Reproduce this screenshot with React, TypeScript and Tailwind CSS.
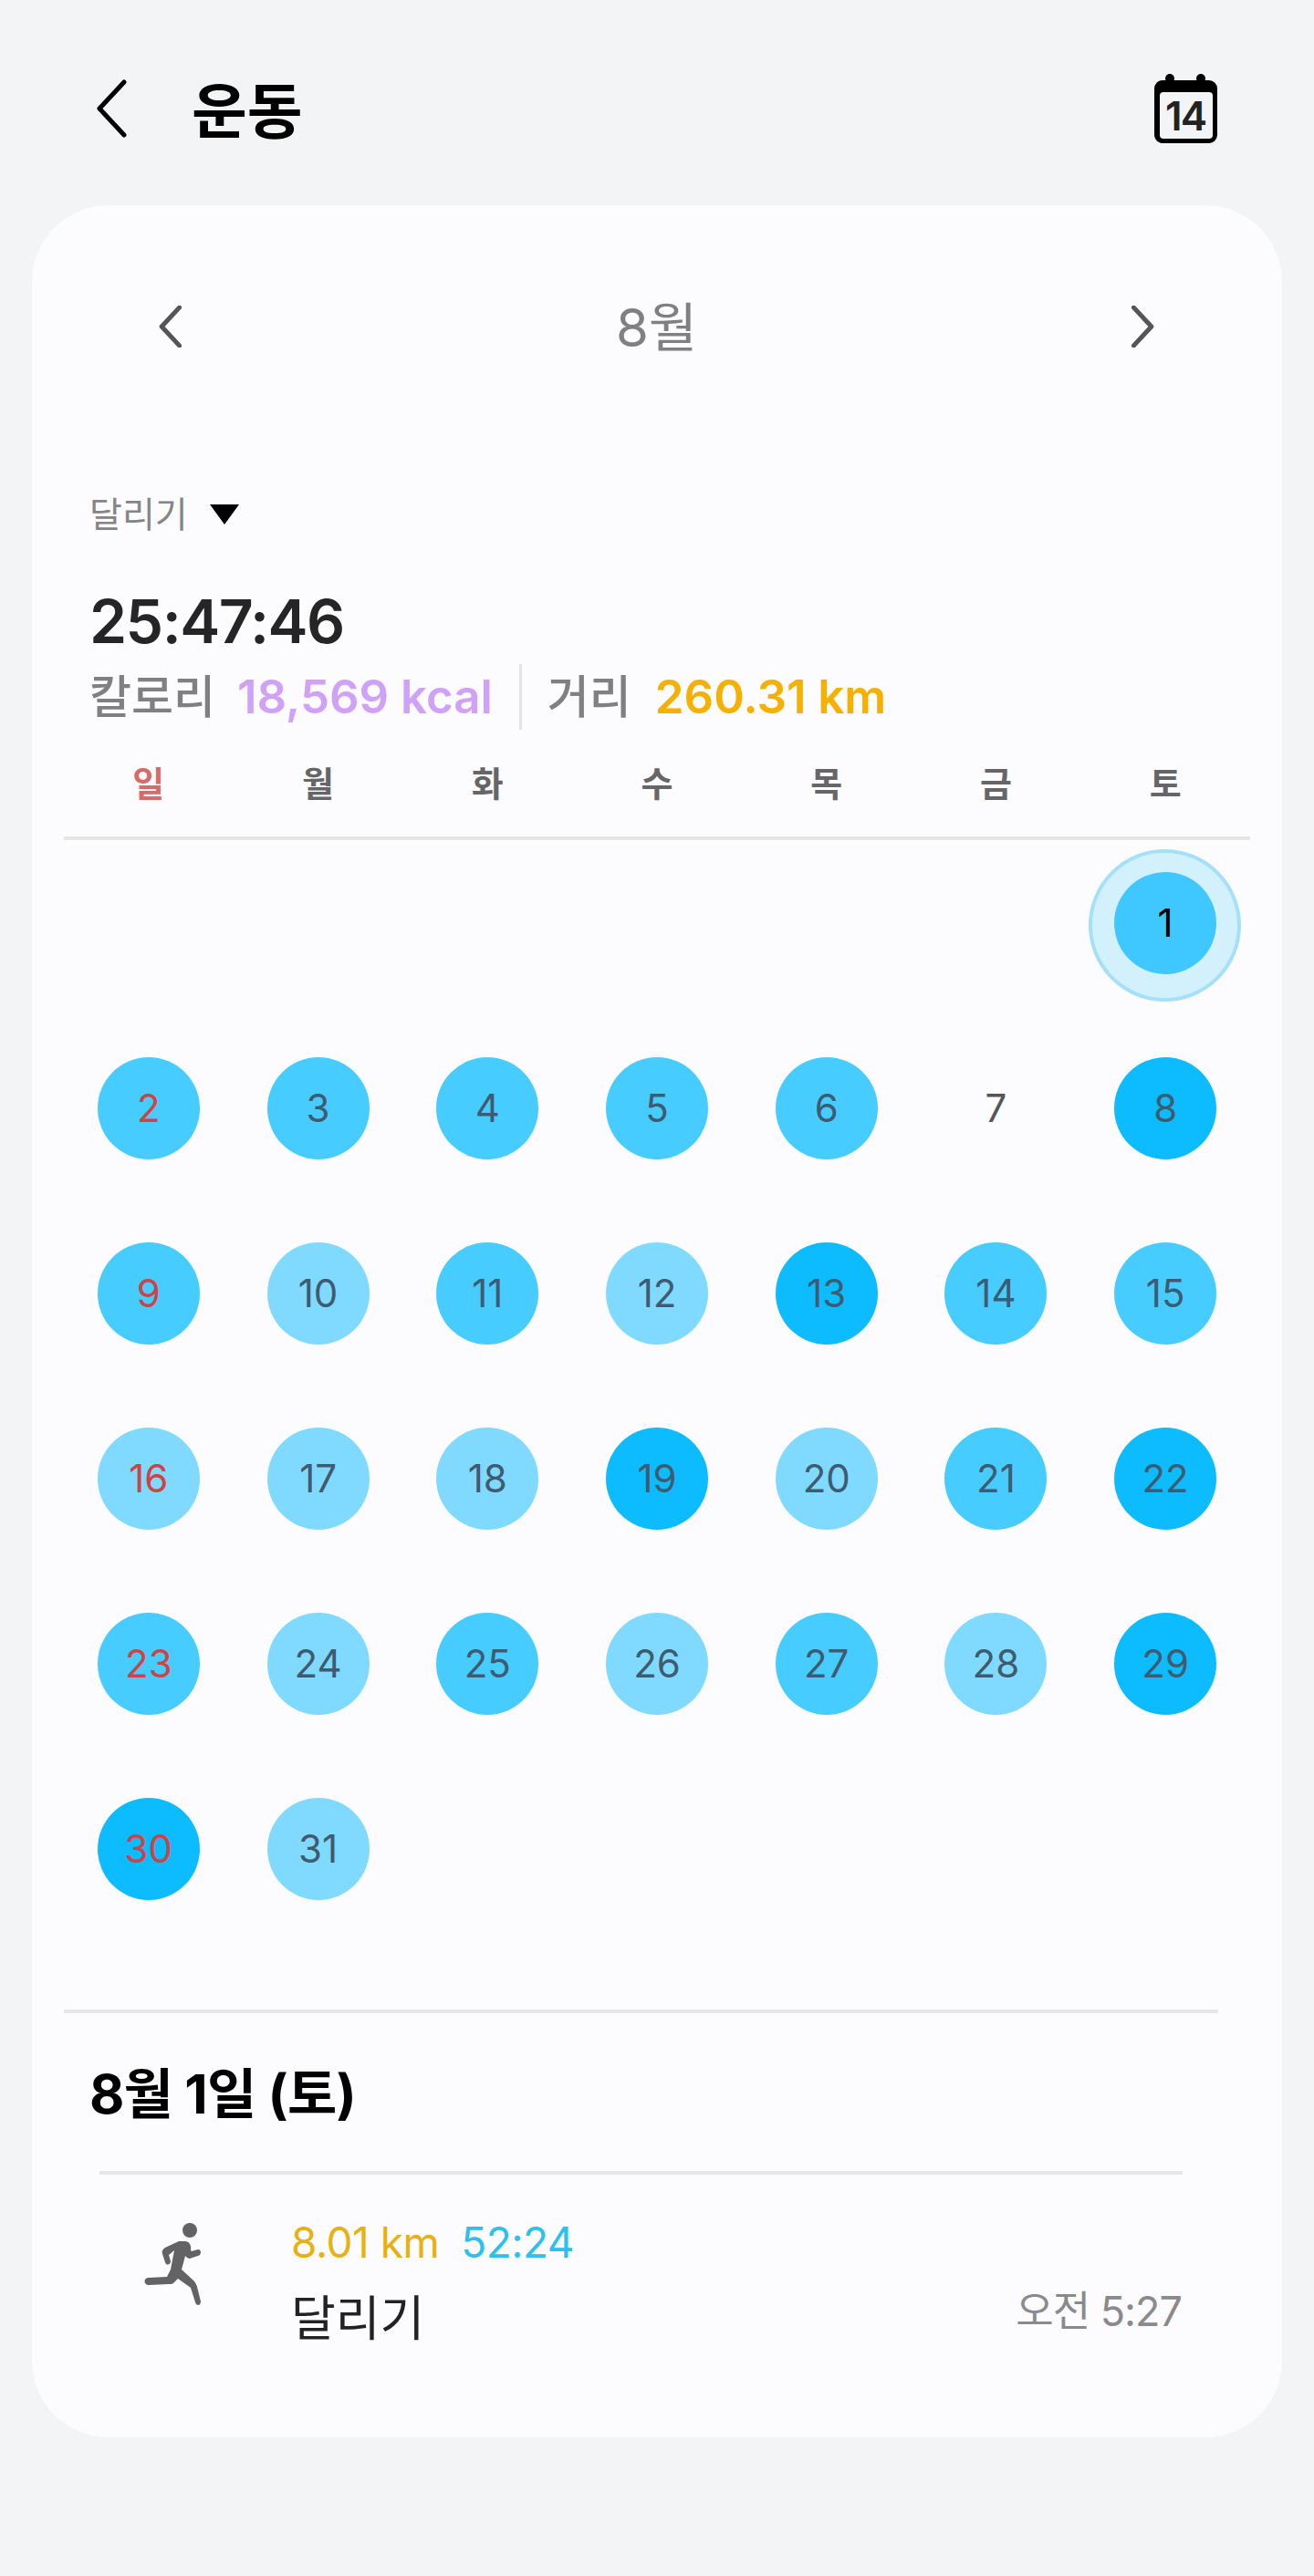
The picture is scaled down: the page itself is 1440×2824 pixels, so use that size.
const font = { fontFamily: '"Inter","Noto Sans CJK KR",sans-serif' };

type Level = 0 | 1 | 2 | 3;
const L: Level[] = [2, 2, 2, 2, 2, 0, 3, 2, 1, 2, 1, 3, 2, 2, 1, 1, 1, 3, 1, 2, 3, 2, 1, 2, 1, 2, 1, 3, 3, 1];
const weekdays = ['일', '월', '화', '수', '목', '금', '토'];

function Chevron({ dir, className, color, sw }: { dir: 'l' | 'r'; className: string; color: string; sw: number }) {
  return (
    <svg viewBox="0 0 34 64" className={className} fill="none" stroke={color} strokeWidth={sw} strokeLinecap="round" strokeLinejoin="round">
      {dir === 'l' ? <path d="M31 3 L4 32 L31 61" /> : <path d="M3 3 L30 32 L3 61" />}
    </svg>
  );
}

function Day({ n, sunday }: { n: number; sunday: boolean }) {
  const level = n === 1 ? 2 : L[n - 2];
  const bg = n === 1 ? 'bg-[#3fc7ff]' : level === 0 ? '' : level === 1 ? 'bg-[#80d9ff]' : level === 2 ? 'bg-[#47ccff]' : 'bg-[#0dbbff]';
  const color = n === 1 ? 'text-black' : sunday ? 'text-[#cf4343]' : level === 0 ? 'text-[#555558]' : 'text-[#3f5b70]';
  return (
    <div className="relative flex h-[203px] items-center justify-center">
      {n === 1 && <div className="absolute left-[9px] top-[21px] h-[167px] w-[167px] rounded-full border-[4px] border-[#a4e1f8] bg-[#d2f1fd]" />}
      <div className={`relative flex h-[112px] w-[112px] items-center justify-center rounded-full text-[42px] ${bg} ${color}`}>{n}</div>
    </div>
  );
}

export default function App() {
  const cells: (number | null)[] = [null, null, null, null, null, null];
  for (let i = 1; i <= 31; i++) cells.push(i);
  return (
    <div style={font} className="flex h-[2824px] w-[1440px] flex-col overflow-hidden bg-[#f3f4f6]">
      <header className="flex h-[225px] shrink-0 items-start px-[105px] pt-[81px]">
        <Chevron dir="l" className="mt-[6px] h-[64px] w-[34px]" color="#000" sw={5} />
        <h1 className="ml-[71px] mt-[3px] text-[66px] font-bold leading-[76px] text-black">운동</h1>
        <div className="relative ml-auto mr-[-1px] h-[80px] w-[72px] -translate-x-[1px]">
          <svg viewBox="0 0 72 80" className="h-full w-full">
            <circle cx="19" cy="5" r="5" fill="#000" />
            <circle cx="53" cy="5" r="5" fill="#000" />
            <rect x="2" y="7" width="69" height="69" rx="9" fill="#000" />
            <rect x="8" y="20" width="58" height="51" rx="4" fill="#f3f4f6" />
          </svg>
          <span className="absolute inset-x-0 top-[20px] text-center text-[44px] font-semibold leading-[52px] tracking-[-2px] text-[#222]">14</span>
        </div>
      </header>

      <main className="mx-[35px] flex h-[2447px] shrink-0 flex-col rounded-[84px] bg-[#fcfcfe]">
        <div className="flex h-[299px] shrink-0 items-start justify-between pl-[139px] pr-[140px] pt-[110px]">
          <Chevron dir="l" className="h-[46px] w-[25px]" color="#555558" sw={7} />
          <span className="mt-[-12px] text-[58px] leading-[72px] text-[#808082]">8월</span>
          <Chevron dir="r" className="h-[46px] w-[25px]" color="#555558" sw={7} />
        </div>

        <div className="flex h-[80px] shrink-0 items-center pl-[63px]">
          <span className="text-[39px] leading-[50px] text-[#858587]">달리기</span>
          <svg viewBox="0 0 32 22" className="ml-[24px] h-[22px] w-[32px]"><path d="M0 0H32L16 22Z" fill="#000" /></svg>
        </div>

        <div className="mt-[37px] pl-[63px] text-[66px] font-semibold leading-[80px] tracking-[-1.5px] text-[#252525]">25:47:46</div>

        <div className="mt-[7px] flex h-[72px] shrink-0 items-center pl-[63px] text-[50px] font-medium">
          <span className="text-[#808082]">칼로리</span>
          <span className="ml-[24px] text-[51px] font-semibold text-[#d0a2f7]">18,569 kcal</span>
          <span className="ml-[29px] h-[72px] w-[3px] bg-[#e4e4e6]" />
          <span className="ml-[28px] text-[#808082]">거리</span>
          <span className="ml-[26px] text-[51px] font-semibold text-[#f5b000]">260.31 km</span>
        </div>

        <div className="mx-[35px] mt-[9px] grid h-[112px] shrink-0 grid-cols-7 items-center border-b-[4px] border-[#e6e6e8] pb-[9px]">
          {weekdays.map((d, i) => (
            <div key={d} className={`text-center text-[38px] font-semibold leading-[50px] ${i === 0 ? 'text-[#d96a6a]' : 'text-[#666668]'}`}>{d}</div>
          ))}
        </div>

        <div className="mx-[35px] mt-[-11px] grid shrink-0 grid-cols-7">
          {cells.map((n, i) => (n === null ? <div key={i} className="h-[203px]" /> : <Day key={i} n={n} sunday={i % 7 === 0} />))}
        </div>

        <div className="ml-[35px] mt-[75px] h-[4px] w-[1265px] shrink-0 bg-[#e6e6e8]" />

        <div className="mt-[54px] pl-[63px] text-[59px] font-bold leading-[70px] tracking-[-0.8px] text-black">8월 1일 (토)</div>

        <div className="ml-[74px] mt-[49px] h-[4px] w-[1187px] shrink-0 bg-[#e6e6e8]" />

        <div className="flex shrink-0 items-start pl-[95px] pr-[110px] pt-[24px]">
          <svg viewBox="0 0 120 120" className="mt-[2px] h-[120px] w-[120px] shrink-0" fill="#636366" stroke="none">
            <circle cx="78" cy="35" r="8" />
            <path d="M72 47 C78 47 80 52 79 57 L80 58 L87 56 C91 56 91 62 87 63 L78 66 C76 66 74 64 73 63 L69 78 L82 90 C84 92 85 94 86 97 L90 113 C90 118 85 118 84 114 L79 98 L65 88 L60 93 C59 94 57 94 55 94 L33 95 C27 95 27 87 33 87 L53 86 L57 78 L61 57 L55 62 L57 69 C57 73 52 74 51 70 L48 61 C47 58 48 56 51 54 L66 47 Z" />
          </svg>
          <div className="ml-[69px] mt-[22px] flex flex-col">
            <div className="flex text-[46px] leading-[56px] tracking-[-0.5px]">
              <span className="text-[#e8b010]">8.01 km</span>
              <span className="ml-[24px] text-[#2cc0ee]">52:24</span>
            </div>
            <div className="mt-[20px] text-[53px] leading-[72px] text-[#222]">달리기</div>
          </div>
          <div className="ml-auto mt-[96px] text-[45px] leading-[60px] tracking-[-1px] text-[#8a8a8c]">오전 5:27</div>
        </div>
      </main>
    </div>
  );
}
